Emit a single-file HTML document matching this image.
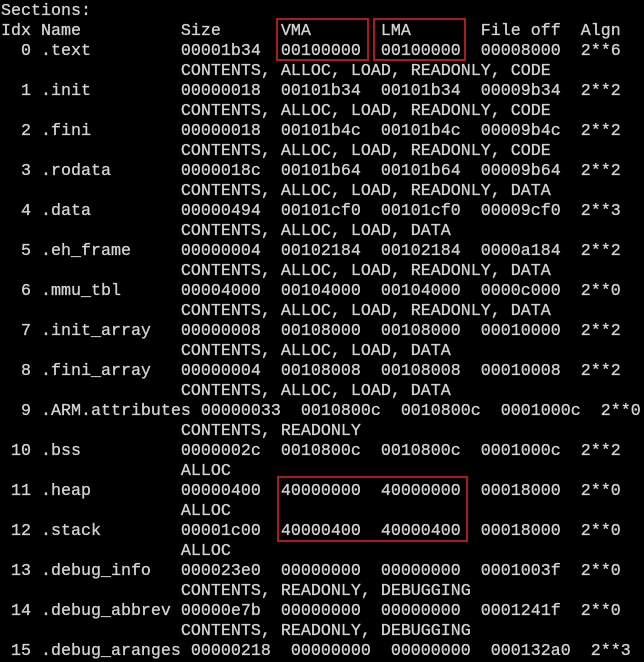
<!DOCTYPE html><html><head><style>
body{margin:0;background:#000;width:644px;height:658px;overflow:hidden;position:relative}
pre{margin:0;position:absolute;left:1px;top:2px;font-family:"Liberation Mono","DejaVu Sans Mono",monospace;font-size:16.67px;line-height:20px;color:#d2d2d2;-webkit-text-stroke:0.3px #d2d2d2}
.b{position:absolute;border:2px solid #a81c1c;box-sizing:border-box}
</style></head><body>
<pre>Sections:
Idx Name          Size      VMA       LMA       File off  Algn
  0 .text         00001b34  00100000  00100000  00008000  2**6
                  CONTENTS, ALLOC, LOAD, READONLY, CODE
  1 .init         00000018  00101b34  00101b34  00009b34  2**2
                  CONTENTS, ALLOC, LOAD, READONLY, CODE
  2 .fini         00000018  00101b4c  00101b4c  00009b4c  2**2
                  CONTENTS, ALLOC, LOAD, READONLY, CODE
  3 .rodata       0000018c  00101b64  00101b64  00009b64  2**2
                  CONTENTS, ALLOC, LOAD, READONLY, DATA
  4 .data         00000494  00101cf0  00101cf0  00009cf0  2**3
                  CONTENTS, ALLOC, LOAD, DATA
  5 .eh_frame     00000004  00102184  00102184  0000a184  2**2
                  CONTENTS, ALLOC, LOAD, READONLY, DATA
  6 .mmu_tbl      00004000  00104000  00104000  0000c000  2**0
                  CONTENTS, ALLOC, LOAD, READONLY, DATA
  7 .init_array   00000008  00108000  00108000  00010000  2**2
                  CONTENTS, ALLOC, LOAD, DATA
  8 .fini_array   00000004  00108008  00108008  00010008  2**2
                  CONTENTS, ALLOC, LOAD, DATA
  9 .ARM.attributes 00000033  0010800c  0010800c  0001000c  2**0
                  CONTENTS, READONLY
 10 .bss          0000002c  0010800c  0010800c  0001000c  2**2
                  ALLOC
 11 .heap         00000400  40000000  40000000  00018000  2**0
                  ALLOC
 12 .stack        00001c00  40000400  40000400  00018000  2**0
                  ALLOC
 13 .debug_info   000023e0  00000000  00000000  0001003f  2**0
                  CONTENTS, READONLY, DEBUGGING
 14 .debug_abbrev 00000e7b  00000000  00000000  0001241f  2**0
                  CONTENTS, READONLY, DEBUGGING
 15 .debug_aranges 00000218  00000000  00000000  000132a0  2**3</pre>
<div class="b" style="left:276px;top:18px;width:93px;height:43px"></div>
<div class="b" style="left:373px;top:18px;width:93px;height:43px"></div>
<div class="b" style="left:277px;top:476px;width:191px;height:66px"></div>
</body></html>
